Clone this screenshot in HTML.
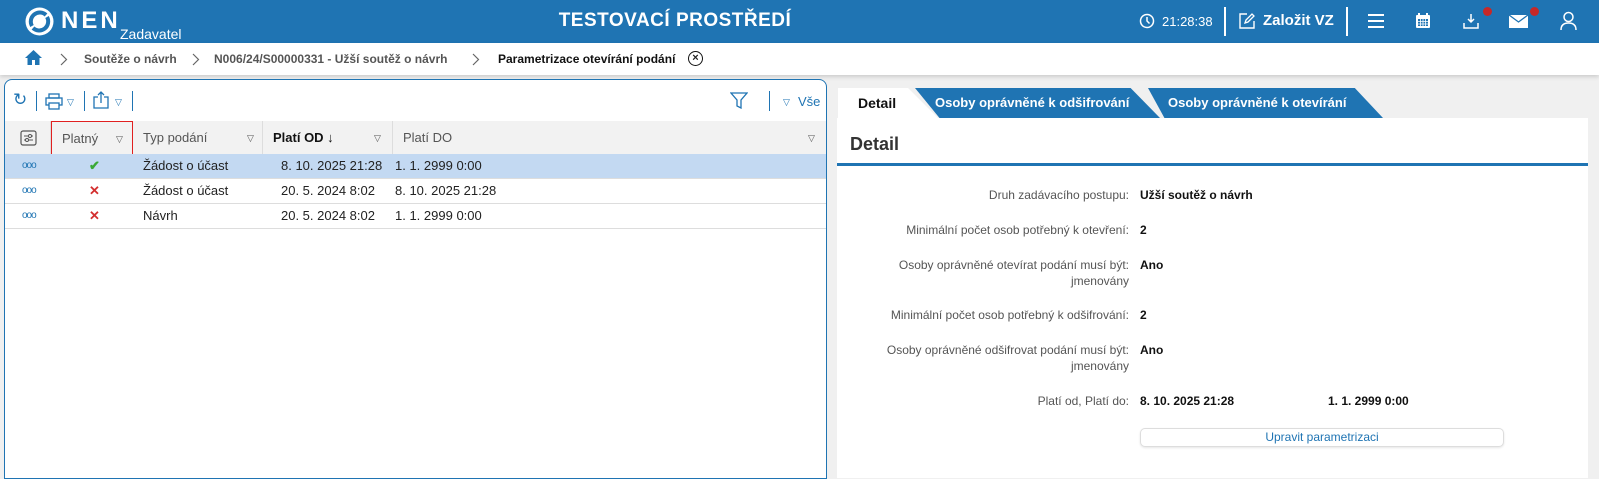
<!DOCTYPE html>
<html><head><meta charset="utf-8"><style>
*{box-sizing:border-box;margin:0;padding:0}
body{width:1599px;height:466px;overflow:hidden;background:#f0f0f0;font-family:"Liberation Sans",Arial,sans-serif;font-size:13px;color:#222;position:relative}
.abs{position:absolute}
#hdr{left:0;top:0;width:1599px;height:43px;background:#1f74b3;color:#fff}
#bc{left:0;top:43px;width:1599px;height:32px;background:#fff;box-shadow:0 2px 4px rgba(0,0,0,.15)}
.bct{position:absolute;top:9px;font-weight:bold;color:#555;font-size:12px}
#lp{left:4px;top:79px;width:823px;height:400px;background:#fff;border:1px solid #1f74b3;border-radius:8px 8px 0 0}
.th{position:absolute;top:41px;height:34px;line-height:34px;background:#f2f2f2;border-right:1px solid #ddd;color:#555;font-size:13px;padding-left:10px}
.row{position:absolute;left:0;width:821px;height:25px;border-bottom:1px solid #ddd;line-height:24px}
.row span{position:absolute}
.tri{position:absolute;font-size:9px;color:#555}
#rp{left:837px;top:118px;width:751px;height:360px;background:#fff}
.lab{position:absolute;right:459px;text-align:right;color:#555;font-size:12px;line-height:16px}
.val{position:absolute;left:303px;font-weight:bold;color:#111;font-size:12px;line-height:16px}
.tab{position:absolute;top:88px;height:30px;line-height:30px;font-weight:bold;color:#fff;background:#1f74b3;font-size:13px}
</style></head><body>
<div id="hdr" class="abs">
 <svg class="abs" style="left:24px;top:6px" width="31" height="31" viewBox="0 0 31 31"><circle cx="15.5" cy="15.5" r="14" fill="#fff"/><path d="M8 20 A9 9 0 0 1 22 9" stroke="#1f74b3" stroke-width="4" fill="none"/><path d="M23 11 A9 9 0 0 1 9 22" stroke="#1f74b3" stroke-width="4" fill="none"/></svg>
 <div class="abs" style="left:61px;top:7px;font-size:24px;font-weight:bold;letter-spacing:3px">NEN</div>
 <div class="abs" style="left:120px;top:26px;font-size:14px">Zadavatel</div>
 <div class="abs" style="left:0;width:1350px;text-align:center;top:10px;font-size:19px;font-weight:bold;letter-spacing:.5px">TESTOVACÍ PROSTŘEDÍ</div>
 <svg class="abs" style="left:1139px;top:13px" width="16" height="16"><circle cx="8" cy="8" r="6.5" stroke="#fff" stroke-width="1.5" fill="none"/><path d="M8 4v4l2.5 2.5" stroke="#fff" stroke-width="1.5" fill="none"/></svg>
 <div class="abs" style="left:1162px;top:14px;font-size:13px">21:28:38</div>
 <div class="abs" style="left:1224px;top:7px;width:2px;height:29px;background:#fff"></div>
 <svg class="abs" style="left:1238px;top:12px" width="18" height="18"><path d="M9 2H2v14h14V9" stroke="#fff" stroke-width="1.4" fill="none"/><path d="M7 11l1-3 6-6 2 2-6 6z" stroke="#fff" stroke-width="1.3" fill="none"/></svg>
 <div class="abs" style="left:1263px;top:12px;font-size:15px;font-weight:bold">Založit VZ</div>
 <div class="abs" style="left:1346px;top:7px;width:2px;height:29px;background:#fff"></div>
 <div class="abs" style="left:1368px;top:14px;width:16px;height:2px;background:#fff;box-shadow:0 6px 0 #fff,0 12px 0 #fff"></div>
 <svg class="abs" style="left:1415px;top:12px" width="16" height="17"><rect x="1" y="3" width="14" height="13" rx="1" fill="#fff"/><rect x="3" y="7" width="10" height="7" fill="#1f74b3"/><path d="M4 1v4M12 1v4" stroke="#fff" stroke-width="2"/><path d="M5.5 7v7M8 7v7M10.5 7v7M3 9.5h10M3 12h10" stroke="#fff" stroke-width=".8"/></svg>
 <svg class="abs" style="left:1462px;top:12px" width="18" height="18"><path d="M9 2v8M6 7l3 3 3-3" stroke="#fff" stroke-width="1.5" fill="none"/><path d="M2 11v5h14v-5" stroke="#fff" stroke-width="1.5" fill="none"/></svg>
 <div class="abs" style="left:1483px;top:7px;width:9px;height:9px;border-radius:50%;background:#c62828"></div>
 <svg class="abs" style="left:1509px;top:15px" width="19" height="13"><rect x="0" y="0" width="19" height="13" fill="#fff"/><path d="M0 0l9.5 7L19 0" stroke="#1f74b3" stroke-width="1.3" fill="none"/></svg>
 <div class="abs" style="left:1530px;top:7px;width:9px;height:9px;border-radius:50%;background:#c62828"></div>
 <svg class="abs" style="left:1560px;top:11px" width="17" height="20"><circle cx="8.5" cy="6" r="4.5" stroke="#fff" stroke-width="1.5" fill="none"/><path d="M1 19c0-5 3-7 7.5-7s7.5 2 7.5 7" stroke="#fff" stroke-width="1.5" fill="none"/></svg>
</div>
<div id="bc" class="abs">
 <svg class="abs" style="left:24px;top:6px" width="19" height="17"><path d="M9.5 1L1 9h2.5v7h4.5v-5h3v5h4.5V9H18z" fill="#1f74b3"/></svg>
 <svg class="abs" style="left:60px;top:10px" width="8" height="13"><path d="M1 1l5.5 5.5L1 12" stroke="#666" stroke-width="1.2" fill="none"/></svg>
 <div class="bct" style="left:84px">Soutěže o návrh</div>
 <svg class="abs" style="left:192px;top:10px" width="8" height="13"><path d="M1 1l5.5 5.5L1 12" stroke="#666" stroke-width="1.2" fill="none"/></svg>
 <div class="bct" style="left:214px">N006/24/S00000331 - Užší soutěž o návrh</div>
 <svg class="abs" style="left:472px;top:10px" width="8" height="13"><path d="M1 1l5.5 5.5L1 12" stroke="#666" stroke-width="1.2" fill="none"/></svg>
 <div class="bct" style="left:498px;color:#111">Parametrizace otevírání podání</div>
 <div class="abs" style="left:688px;top:8px;width:15px;height:15px;border:1.5px solid #111;border-radius:50%;text-align:center;line-height:12px;font-size:11px;font-weight:bold">×</div>
</div>
<div id="lp" class="abs">
 <div class="abs" style="left:8px;top:10px;font-size:17px;color:#1f74b3">↻</div>
 <div class="abs" style="left:31px;top:11px;width:1px;height:20px;background:#1f74b3"></div>
 <svg class="abs" style="left:40px;top:13px" width="18" height="17"><rect x="4" y="1" width="10" height="4" stroke="#1f74b3" fill="none" stroke-width="1.3"/><rect x="1" y="5" width="16" height="7" stroke="#1f74b3" fill="none" stroke-width="1.3"/><rect x="4" y="10" width="10" height="6" fill="#fff" stroke="#1f74b3" stroke-width="1.3"/></svg>
 <div class="tri" style="left:62px;top:17px;color:#1f74b3">▽</div>
 <div class="abs" style="left:79px;top:11px;width:1px;height:20px;background:#1f74b3"></div>
 <svg class="abs" style="left:88px;top:11px" width="16" height="18"><path d="M5 6H1v11h14V6h-4M8 12V1M5 4l3-3 3 3" stroke="#1f74b3" stroke-width="1.3" fill="none"/></svg>
 <div class="tri" style="left:110px;top:17px;color:#1f74b3">▽</div>
 <div class="abs" style="left:127px;top:11px;width:1px;height:20px;background:#1f74b3"></div>
 <svg class="abs" style="left:725px;top:11px" width="18" height="18"><path d="M1 2h16l-6 7v8l-4-2V9z" stroke="#1f74b3" stroke-width="1.3" fill="none"/></svg>
 <div class="abs" style="left:764px;top:11px;width:1px;height:20px;background:#1f74b3"></div>
 <div class="tri" style="left:778px;top:17px;color:#1f74b3">▽</div>
 <div class="abs" style="left:793px;top:14px;color:#1f74b3">Vše</div>
 <div class="th" style="left:0;width:46px"><svg style="position:absolute;left:15px;top:9px" width="17" height="16"><rect x="1" y="1" width="15" height="14" rx="2" stroke="#555" fill="none" stroke-width="1.2"/><path d="M4 6h9M4 10h9" stroke="#555"/><circle cx="10" cy="6" r="1.5" fill="#fff" stroke="#555"/><circle cx="7" cy="10" r="1.5" fill="#fff" stroke="#555"/></svg></div>
 <div class="th" style="left:46px;width:82px;border:1px solid #e02020">Platný<span class="tri" style="left:64px;top:0">▽</span></div>
 <div class="th" style="left:128px;width:130px">Typ podání<span class="tri" style="left:114px;top:0">▽</span></div>
 <div class="th" style="left:258px;width:130px;color:#111;font-weight:bold">Platí OD ↓<span class="tri" style="left:111px;top:0;font-weight:normal">▽</span></div>
 <div class="th" style="left:388px;width:433px;border-right:none">Platí DO<span class="tri" style="left:415px;top:0">▽</span></div>
 <div class="row" style="top:74px;background:#c3d9f2"><span style="left:17px;color:#1f74b3;font-size:10px;letter-spacing:-1px">ooo</span><span style="left:84px;color:#3aa935;font-weight:bold">✔</span><span style="left:138px">Žádost o účast</span><span style="left:276px">8. 10. 2025 21:28</span><span style="left:390px">1. 1. 2999 0:00</span></div>
 <div class="row" style="top:99px"><span style="left:17px;color:#1f74b3;font-size:10px;letter-spacing:-1px">ooo</span><span style="left:84px;color:#d32f2f;font-weight:bold">✕</span><span style="left:138px">Žádost o účast</span><span style="left:276px">20. 5. 2024 8:02</span><span style="left:390px">8. 10. 2025 21:28</span></div>
 <div class="row" style="top:124px"><span style="left:17px;color:#1f74b3;font-size:10px;letter-spacing:-1px">ooo</span><span style="left:84px;color:#d32f2f;font-weight:bold">✕</span><span style="left:138px">Návrh</span><span style="left:276px">20. 5. 2024 8:02</span><span style="left:390px">1. 1. 2999 0:00</span></div>
</div>
<div class="abs" style="left:838px;top:88px;width:100px;height:30px;background:#fff;clip-path:polygon(0 0,70% 0,100% 100%,0 100%)"></div>
<div class="abs" style="left:858px;top:95px;font-weight:bold;font-size:14px;color:#111">Detail</div>
<div class="tab" style="left:915px;width:245px;clip-path:polygon(0 0,88% 0,100% 100%,10% 100%);padding-left:20px">Osoby oprávněné k odšifrování</div>
<div class="tab" style="left:1148px;width:235px;clip-path:polygon(0 0,88% 0,100% 100%,7% 100%);padding-left:20px">Osoby oprávněné k otevírání</div>
<div id="rp" class="abs">
 <div class="abs" style="left:13px;top:16px;font-size:18px;font-weight:bold;color:#333">Detail</div>
 <div class="abs" style="left:0;top:45px;width:751px;height:3px;background:#1f74b3"></div>
 <div class="lab" style="top:69px">Druh zadávacího postupu:</div><div class="val" style="top:69px">Užší soutěž o návrh</div>
 <div class="lab" style="top:104px">Minimální počet osob potřebný k otevření:</div><div class="val" style="top:104px">2</div>
 <div class="lab" style="top:139px">Osoby oprávněné otevírat podání musí být:<br>jmenovány</div><div class="val" style="top:139px">Ano</div>
 <div class="lab" style="top:189px">Minimální počet osob potřebný k odšifrování:</div><div class="val" style="top:189px">2</div>
 <div class="lab" style="top:224px">Osoby oprávněné odšifrovat podání musí být:<br>jmenovány</div><div class="val" style="top:224px">Ano</div>
 <div class="lab" style="top:275px">Platí od, Platí do:</div><div class="val" style="top:275px">8. 10. 2025 21:28</div><div class="val" style="top:275px;left:491px">1. 1. 2999 0:00</div>
 <div class="abs" style="left:303px;top:310px;width:364px;height:19px;border:1px solid #ddd;border-radius:5px;text-align:center;line-height:17px;color:#1f74b3;font-size:12px;box-shadow:0 1px 2px rgba(0,0,0,.1)">Upravit parametrizaci</div>
</div>
</body></html>
